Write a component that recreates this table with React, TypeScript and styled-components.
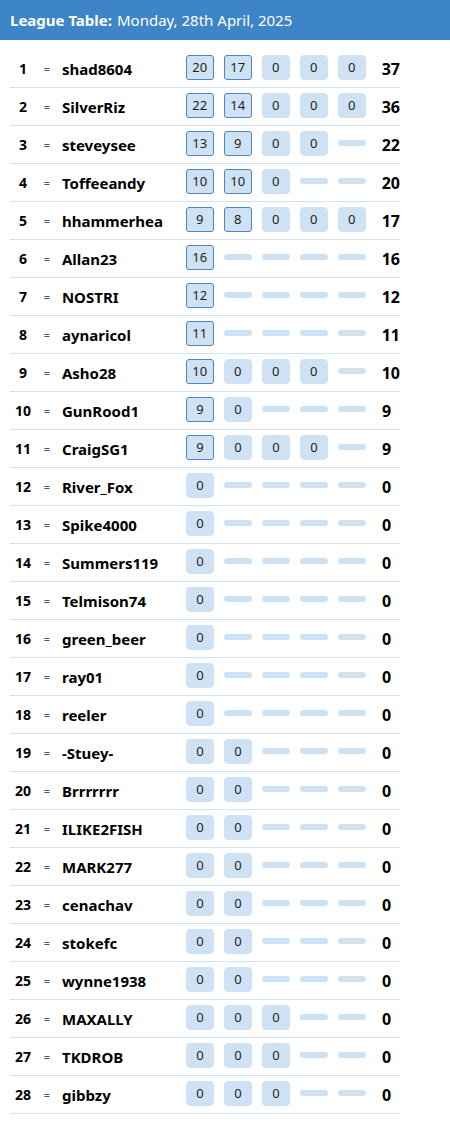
import React from 'react'
import styled, { createGlobalStyle } from 'styled-components'

const GlobalStyle = createGlobalStyle`
    body {
        margin: 0;
        background: #ffffff;
        font-family: "Noto Sans", "Open Sans", sans-serif;
        color: #000000;
    }
`

type Player = {
    name: string
    rounds: (number | null)[]
    total: number
}

const players: Player[] = [
    { name: 'shad8604', rounds: [20, 17, 0, 0, 0], total: 37 },
    { name: 'SilverRiz', rounds: [22, 14, 0, 0, 0], total: 36 },
    { name: 'steveysee', rounds: [13, 9, 0, 0, null], total: 22 },
    { name: 'Toffeeandy', rounds: [10, 10, 0, null, null], total: 20 },
    { name: 'hhammerhea', rounds: [9, 8, 0, 0, 0], total: 17 },
    { name: 'Allan23', rounds: [16, null, null, null, null], total: 16 },
    { name: 'NOSTRI', rounds: [12, null, null, null, null], total: 12 },
    { name: 'aynaricol', rounds: [11, null, null, null, null], total: 11 },
    { name: 'Asho28', rounds: [10, 0, 0, 0, null], total: 10 },
    { name: 'GunRood1', rounds: [9, 0, null, null, null], total: 9 },
    { name: 'CraigSG1', rounds: [9, 0, 0, 0, null], total: 9 },
    { name: 'River_Fox', rounds: [0, null, null, null, null], total: 0 },
    { name: 'Spike4000', rounds: [0, null, null, null, null], total: 0 },
    { name: 'Summers119', rounds: [0, null, null, null, null], total: 0 },
    { name: 'Telmison74', rounds: [0, null, null, null, null], total: 0 },
    { name: 'green_beer', rounds: [0, null, null, null, null], total: 0 },
    { name: 'ray01', rounds: [0, null, null, null, null], total: 0 },
    { name: 'reeler', rounds: [0, null, null, null, null], total: 0 },
    { name: '-Stuey-', rounds: [0, 0, null, null, null], total: 0 },
    { name: 'Brrrrrrr', rounds: [0, 0, null, null, null], total: 0 },
    { name: 'ILIKE2FISH', rounds: [0, 0, null, null, null], total: 0 },
    { name: 'MARK277', rounds: [0, 0, null, null, null], total: 0 },
    { name: 'cenachav', rounds: [0, 0, null, null, null], total: 0 },
    { name: 'stokefc', rounds: [0, 0, null, null, null], total: 0 },
    { name: 'wynne1938', rounds: [0, 0, null, null, null], total: 0 },
    { name: 'MAXALLY', rounds: [0, 0, 0, null, null], total: 0 },
    { name: 'TKDROB', rounds: [0, 0, 0, null, null], total: 0 },
    { name: 'gibbzy', rounds: [0, 0, 0, null, null], total: 0 },
]

const Header = styled.div`
    height: 40px;
    background-color: #3d85c6;
    color: #ffffff;
    display: flex;
    align-items: center;
    padding: 0 10px;
    font-size: 15px;
    white-space: nowrap;
`

const HeaderLabel = styled.span`
    font-weight: 700;
    margin-right: 5px;
`

const Table = styled.div`
    width: 390px;
    margin: 10px 10px 0 10px;
`

const Row = styled.div`
    height: 37px;
    border-bottom: 1px solid #cfe2f3;
    display: flex;
    align-items: center;
`

const Rank = styled.div`
    width: 26px;
    text-align: center;
    font-size: 14px;
    font-weight: 700;
`

const Movement = styled.div`
    width: 22px;
    text-align: center;
    font-size: 11px;
    color: #555555;
`

const Name = styled.div`
    width: 124px;
    padding-left: 4px;
    font-size: 15px;
    font-weight: 700;
    white-space: nowrap;
    overflow: hidden;
`

const Rounds = styled.div`
    display: flex;
    gap: 10px;
    align-items: center;
    margin-top: -3px;
`

const ScoreBox = styled.div<{ $scored: boolean }>`
    width: 28px;
    height: 25px;
    box-sizing: border-box;
    display: flex;
    align-items: center;
    justify-content: center;
    background-color: #cfe2f3;
    border: 1px solid ${p => (p.$scored ? '#4a86c5' : '#cfe2f3')};
    border-radius: ${p => (p.$scored ? '3px' : '4px')};
    font-size: 13px;
    color: #222222;
`

const Dash = styled.div`
    width: 28px;
    height: 6px;
    border-radius: 3px;
    background-color: #cfe2f3;
`

const Total = styled.div`
    margin-left: 16px;
    font-size: 16px;
    font-weight: 700;
`

const App: React.FC = () => {
    return (
        <>
            <GlobalStyle />
            <Header>
                <HeaderLabel>League Table:</HeaderLabel>
                Monday, 28th April, 2025
            </Header>
            <Table>
                {players.map((p, i) => (
                    <Row key={p.name}>
                        <Rank>{i + 1}</Rank>
                        <Movement>=</Movement>
                        <Name>{p.name}</Name>
                        <Rounds>
                            {p.rounds.map((r, j) =>
                                r === null ? (
                                    <Dash key={j} />
                                ) : (
                                    <ScoreBox key={j} $scored={r > 0}>{r}</ScoreBox>
                                )
                            )}
                        </Rounds>
                        <Total>{p.total}</Total>
                    </Row>
                ))}
            </Table>
        </>
    )
}

export default App
